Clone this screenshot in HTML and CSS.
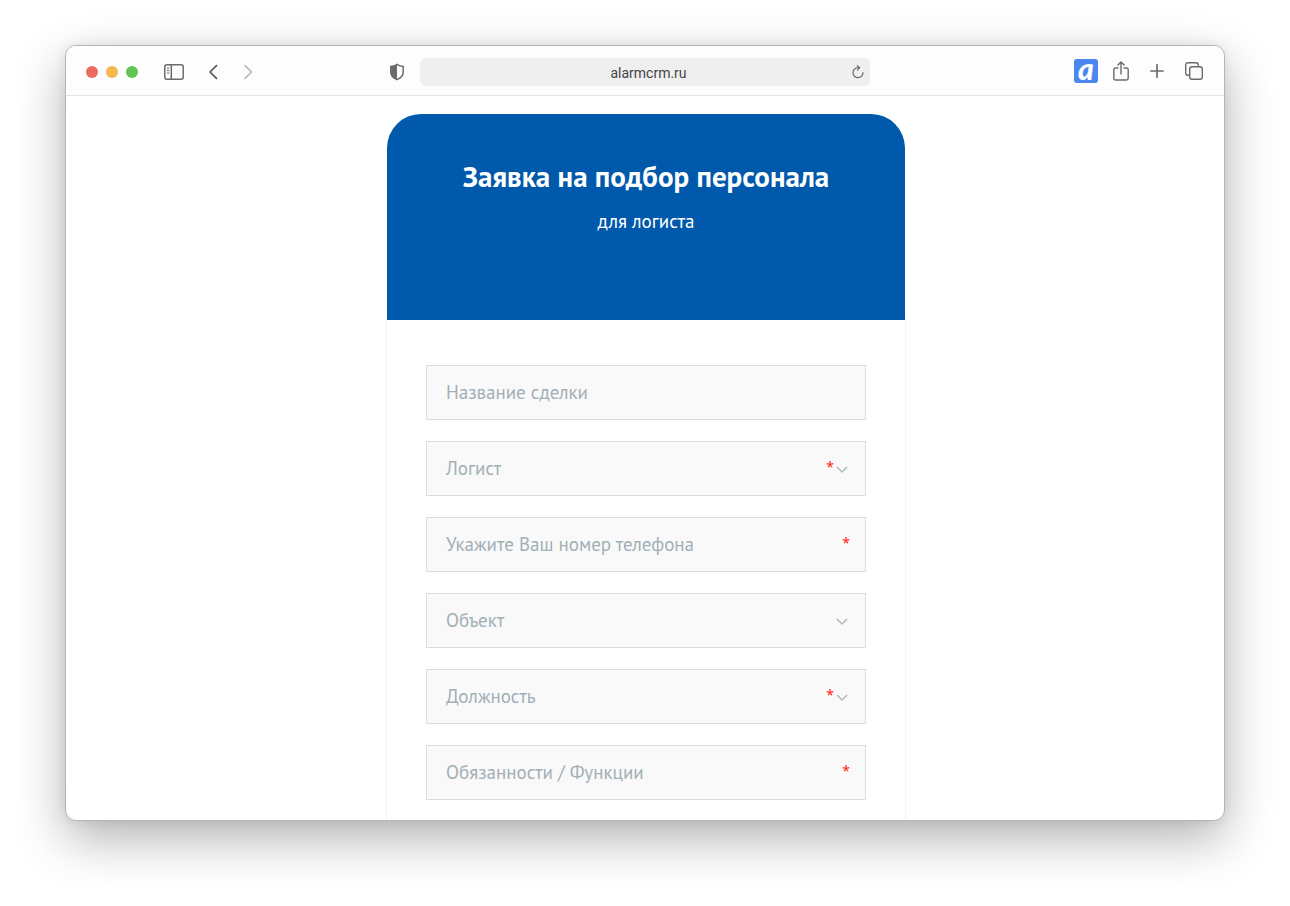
FILE: index.html
```
<!DOCTYPE html>
<html lang="ru">
<head>
    <meta charset="UTF-8">
    <meta name="viewport" content="width=device-width, initial-scale=1.0">
    <title>Заявка на подбор персонала</title>
    <link rel="stylesheet" href="styles.css">
</head>
<body>
    <div class="window">
        <div class="toolbar">
            <div class="toolbar-left">
                <div class="dots">
                    <button class="dot red" aria-label="Закрыть"></button>
                    <button class="dot yellow" aria-label="Свернуть"></button>
                    <button class="dot green" aria-label="Развернуть"></button>
                </div>
                <button class="icon sidebar" aria-label="Боковая панель">
                    <svg width="20" height="16" viewBox="0 0 20 16" fill="none" stroke="#6b6b6b" stroke-width="1.5"><rect x=".8" y=".8" width="18.4" height="14.4" rx="2"/><path d="M7.3 1v14"/><path d="M2.9 4.2h2.4M2.9 6.6h2.4M2.9 9h2.4" stroke-width="1"/></svg>
                </button>
                <button class="icon back" aria-label="Назад">
                    <svg width="10" height="16" viewBox="0 0 10 16" fill="none" stroke="#555" stroke-width="1.7" stroke-linecap="round" stroke-linejoin="round"><path d="M8.5 1.7L2 8l6.5 6.3"/></svg>
                </button>
                <button class="icon forward" aria-label="Вперёд">
                    <svg width="10" height="16" viewBox="0 0 10 16" fill="none" stroke="#b9b9b9" stroke-width="1.7" stroke-linecap="round" stroke-linejoin="round"><path d="M2 1.7L8.5 8 2 14.3"/></svg>
                </button>
                <button class="icon shield" aria-label="Конфиденциальность">
                    <svg width="16" height="18" viewBox="0 0 16 18"><path d="M8 1.3c2 1.4 4 2 6.2 2.3v5.6c0 3.4-2.6 5.8-6.2 7.4-3.6-1.6-6.2-4-6.2-7.4V3.6C4 3.3 6 2.7 8 1.3z" fill="none" stroke="#6b6b6b" stroke-width="1.5"/><path d="M8 1.3v15.3c-3.6-1.6-6.2-4-6.2-7.4V3.6C4 3.3 6 2.7 8 1.3z" fill="#6b6b6b"/></svg>
                </button>
            </div>
            <div class="address">
                <input type="text" value="alarmcrm.ru" aria-label="Адрес">
                <button class="icon" aria-label="Обновить">
                    <svg width="14" height="14" viewBox="0 0 14 14" fill="none" stroke="#6b6b6b" stroke-width="1.2" stroke-linecap="round" stroke-linejoin="round"><path d="M12 7.5A5 5 0 1 1 7 2.7h1.3"/><path d="M6.3.6l2.3 2.1-2.2 2.4"/></svg>
                </button>
            </div>
            <div class="toolbar-right">
                <button class="icon logo" aria-label="Расширение">a</button>
                <button class="icon" aria-label="Поделиться">
                    <svg width="16" height="20" viewBox="0 0 16 20" fill="none" stroke="#6b6b6b" stroke-width="1.4" stroke-linecap="round" stroke-linejoin="round"><path d="M5 7H2.5A1.7 1.7 0 0 0 .8 8.7v8.6A1.7 1.7 0 0 0 2.5 19h11a1.7 1.7 0 0 0 1.7-1.7V8.7A1.7 1.7 0 0 0 13.5 7H11"/><path d="M8 13V1.2M4.9 4L8 1l3.1 3"/></svg>
                </button>
                <button class="icon" aria-label="Новая вкладка">
                    <svg width="14" height="14" viewBox="0 0 14 14" fill="none" stroke="#6b6b6b" stroke-width="1.7" stroke-linecap="round"><path d="M7 .8v12.4M.8 7h12.4"/></svg>
                </button>
                <button class="icon" aria-label="Все вкладки">
                    <svg width="18" height="18" viewBox="0 0 18 18" fill="none" stroke="#6b6b6b" stroke-width="1.4" stroke-linejoin="round"><rect x="4.7" y="4.7" width="12.6" height="12.6" rx="2.2"/><path d="M4.7 13.3H2.9A2.2 2.2 0 0 1 .7 11.1V2.9A2.2 2.2 0 0 1 2.9.7h8.2a2.2 2.2 0 0 1 2.2 2.2v1.8"/></svg>
                </button>
            </div>
        </div>

        <div class="page">
            <form class="card">
                <div class="card-header">
                    <h1>Заявка на подбор персонала</h1>
                    <p>для логиста</p>
                </div>
                <div class="fields">
                    <div class="field">
                        <input type="text" placeholder="Название сделки" aria-label="Название сделки">
                    </div>
                    <div class="field select">
                        <select aria-label="Логист" required>
                            <option value="">Логист</option>
                        </select>
                        <span class="star">*</span>
                        <svg class="arrow" width="12" height="8" viewBox="0 0 12 8"><path d="M1 1l5 5 5-5"/></svg>
                    </div>
                    <div class="field">
                        <input type="tel" placeholder="Укажите Ваш номер телефона" aria-label="Укажите Ваш номер телефона" required>
                        <span class="star">*</span>
                    </div>
                    <div class="field select">
                        <select aria-label="Объект">
                            <option value="">Объект</option>
                        </select>
                        <svg class="arrow" width="12" height="8" viewBox="0 0 12 8"><path d="M1 1l5 5 5-5"/></svg>
                    </div>
                    <div class="field select">
                        <select aria-label="Должность" required>
                            <option value="">Должность</option>
                        </select>
                        <span class="star">*</span>
                        <svg class="arrow" width="12" height="8" viewBox="0 0 12 8"><path d="M1 1l5 5 5-5"/></svg>
                    </div>
                    <div class="field">
                        <input type="text" placeholder="Обязанности / Функции" aria-label="Обязанности / Функции" required>
                        <span class="star">*</span>
                    </div>
                </div>
            </form>
        </div>
    </div>
</body>
</html>
```
FILE: styles.css
```
* { box-sizing: border-box; }
body { margin: 0; padding: 45px 65px 85px; height: 100vh; background: #fff; font-family: "PT Sans", "Noto Sans", sans-serif; }
button { padding: 0; border: 0; background: none; }
svg { display: block; }

.window { height: 100%; display: flex; flex-direction: column; overflow: hidden; background: #fff; border: 1px solid #b5b5b5; border-radius: 11px; box-shadow: 0 18px 50px rgba(0,0,0,0.3), 0 0 12px rgba(0,0,0,0.08); }

/* browser toolbar */
.toolbar { flex: none; display: grid; grid-template-columns: 1fr 450px 1fr; align-items: center; height: 50px; background: #fdfdfd; border-bottom: 1px solid #e4e4e4; }
.toolbar-left { display: flex; align-items: center; padding: 2px 15px 0 20px; }
.toolbar-right { display: flex; align-items: center; justify-content: flex-end; gap: 21px; padding-right: 21px; }
.dots { display: flex; gap: 8px; }
.dot { width: 12px; height: 12px; border-radius: 50%; }
.red { background: #ec6a5e; }
.yellow { background: #f5b84f; }
.green { background: #61c454; }
.sidebar { margin-left: 26px; }
.back { margin-left: 24px; }
.forward { margin-left: 25px; }
.shield { margin-left: auto; }
.logo { width: 24px; height: 24px; margin-right: -6px; padding-bottom: 6px; border-radius: 3px; background: #4a87ef; color: #fff; font: italic 900 30px/18px Lato, sans-serif; }
.address { display: flex; align-items: center; height: 28px; margin-top: 2px; padding: 0 5px 0 26px; background: #efefef; border-radius: 6px; }
.address input { flex: 1; min-width: 0; padding: 2px 0 0; border: 0; outline: 0; background: none; color: #444; text-align: center; font: 14px/20px Roboto, sans-serif; }

/* form */
.page { flex: 1; min-height: 0; padding: 18px 20px 0; overflow: hidden; }
.card { max-width: 518px; margin: 0 auto; }
.page { padding-left: 22px; }
.card-header { position: relative; height: 206px; padding: 43px 20px; background: #0059ab; border-radius: 34px 34px 0 0; color: #fff; text-align: center; }
.card-header h1 { margin: 0; font-size: 29px; line-height: 38px; }
.card-header p { margin: 14px 0 0; font-size: 19px; line-height: 24px; }
.fields { display: flex; flex-direction: column; gap: 21px; padding: 45px 39px; box-shadow: 0 0 0 1px #f3f3f3; }
.field { position: relative; }
.field input, .field select { display: block; width: 100%; height: 55px; padding: 0 19px 2px; border: 1px solid #dcdddd; border-radius: 0; background: #f9f9f9; color: #a3afb6; font: 19px/24px "PT Sans", "Noto Sans", sans-serif; appearance: none; }
.field input::placeholder { color: #a3afb6; opacity: 1; }
.star { position: absolute; top: 14px; right: 16px; color: #f22; font: 14px/24px "Noto Sans", sans-serif; }
.select .star { right: 32px; }
.arrow { position: absolute; top: 25px; right: 18px; fill: none; stroke: #b5b9bb; stroke-width: 1.5; }
```
